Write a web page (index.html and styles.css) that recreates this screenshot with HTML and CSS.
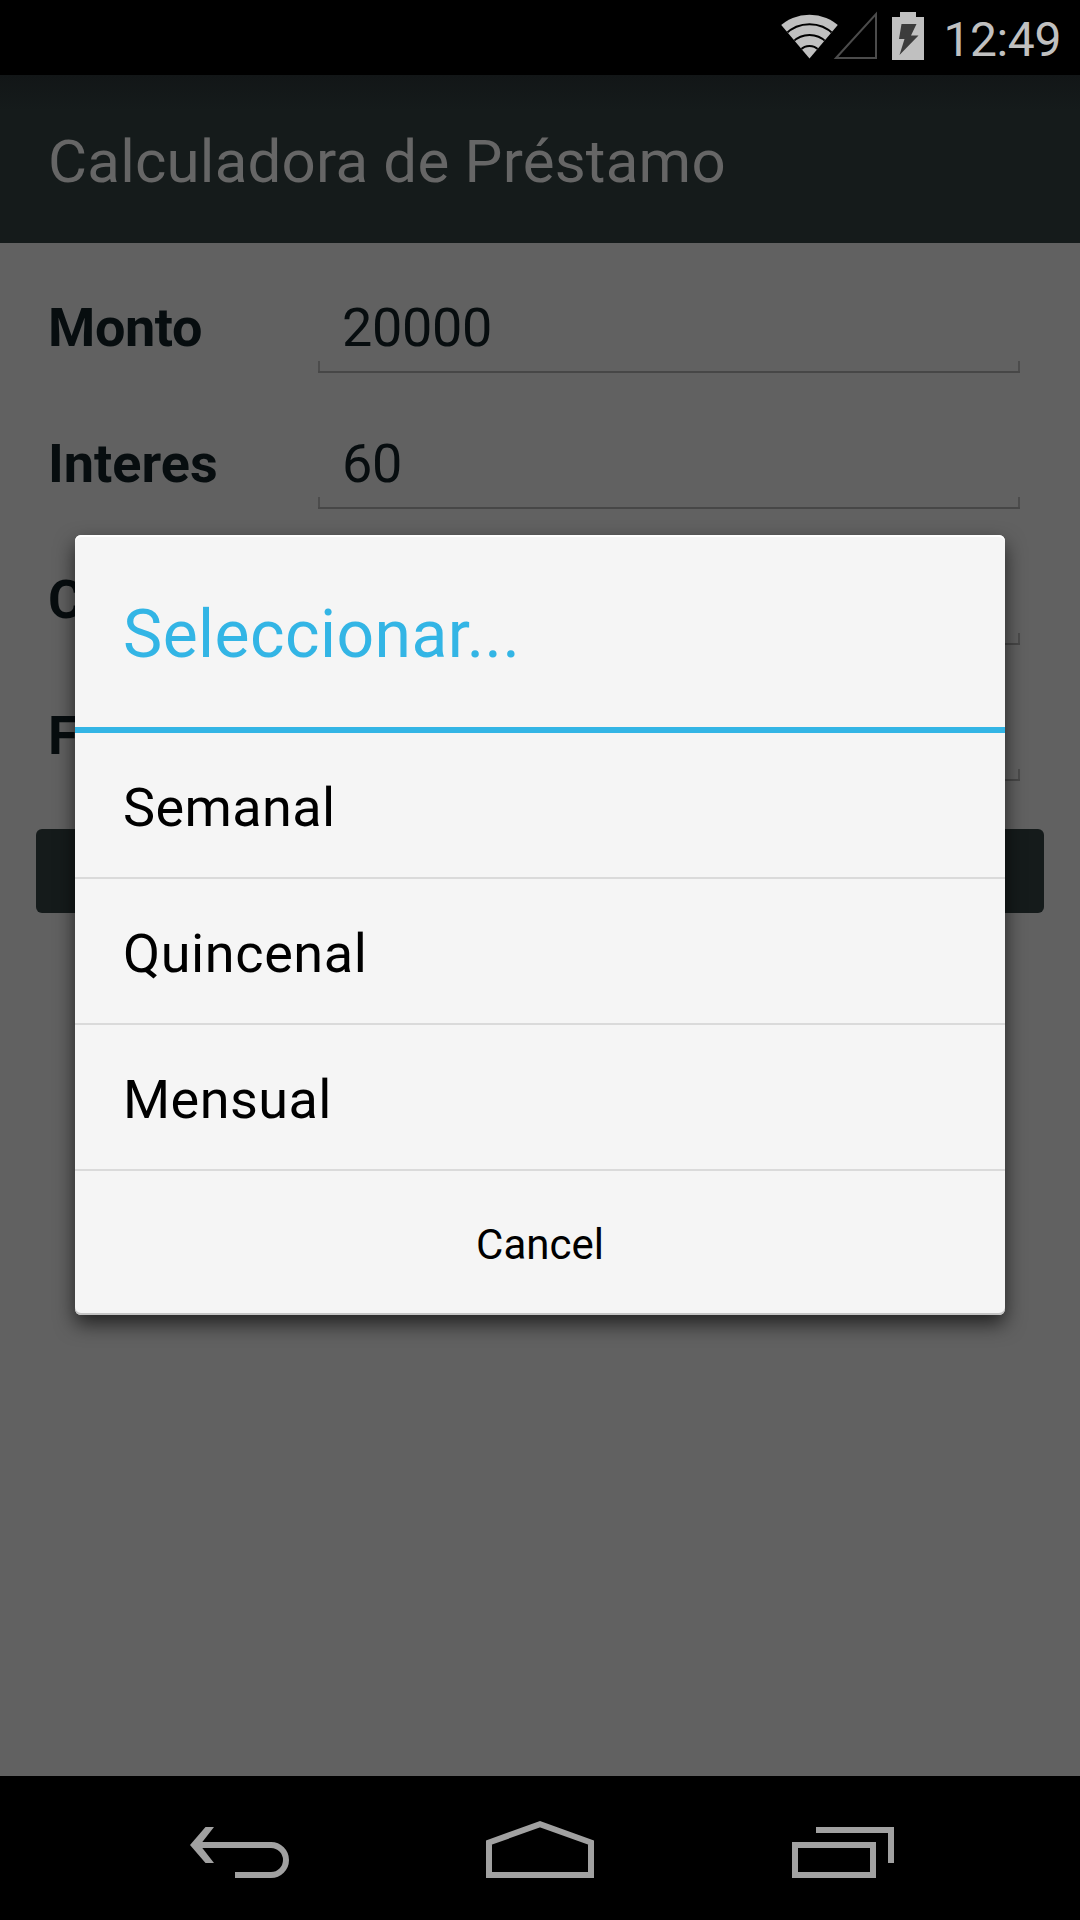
FILE: index.html
```html
<!DOCTYPE html>
<html lang="es">
<head>
<meta charset="utf-8">
<title>Calculadora de Préstamo</title>
<link rel="stylesheet" href="styles.css">
</head>
<body>
<div class="screen">
  <header class="status-bar">
    <svg class="status-icons" width="144" height="75" viewBox="0 0 144 75" aria-hidden="true">
      <clipPath id="wifi-cone"><path d="M29.500 58.500L-3 20V0H62V20Z"/></clipPath>
      <g clip-path="url(#wifi-cone)">
        <circle cx="29.500" cy="58.500" r="43.800" fill="#c0c0c0"/>
        <g fill="none" stroke="#000" stroke-width="2">
          <circle cx="29.500" cy="58.500" r="34.300"/>
          <circle cx="29.500" cy="58.500" r="23.500"/>
          <circle cx="29.500" cy="58.500" r="12.600"/>
        </g>
      </g>
      <path d="M56 58L96 14V58Z" fill="none" stroke="#4b4b4b" stroke-width="2"/>
      <path d="M112 17H120V12H136V17H144V60H112Z" fill="#c0c0c0"/>
      <path d="M121.500 24H136.500L131 35.500H138.500L119.500 55L124.500 39H119Z" fill="#3c3c3c"/>
    </svg>
    <span class="clock">12:49</span>
  </header>

  <div class="action-bar"><h1 class="app-title">Calculadora de Préstamo</h1></div>

  <main class="form">
    <div class="field"><span class="label monto">Monto</span><div class="input">20000</div></div>
    <div class="field"><span class="label">Interes</span><div class="input">60</div></div>
    <div class="field"><span class="label">C</span><div class="input"></div></div>
    <div class="field"><span class="label">F</span><div class="input"></div></div>
    <div class="button"></div>
  </main>

  <nav class="nav-bar">
    <svg width="1080" height="144" viewBox="0 0 1080 144" fill="none" stroke="#a1a1a1" stroke-width="6" aria-hidden="true">
      <path d="M198 69H271A15 15 0 0 1 271 99H235"/>
      <path d="M205.500 51H214L200 69L214 87H205.500L190 69Z" fill="#a1a1a1" stroke="none"/>
      <path d="M489 66.500L540 48.200L591 66.500V99H489Z"/>
      <path d="M795 69H873V99H795Z"/>
      <path d="M816 54H891V87"/>
    </svg>
  </nav>

  <section class="dialog" role="dialog">
    <h2 class="dialog-title">Seleccionar...</h2>
    <div class="option semanal">Semanal</div>
    <div class="option quincenal">Quincenal</div>
    <div class="option mensual">Mensual</div>
    <div class="cancel">Cancel</div>
  </section>
</div>
</body>
</html>
```
FILE: styles.css
```css
* { box-sizing: border-box; }
body { margin: 0; background: #000; font-family: Roboto, sans-serif; }
.screen {
  position: relative;
  display: flex;
  flex-direction: column;
  width: 1080px;
  height: 1920px;
  overflow: hidden;
}
.status-bar {
  display: flex;
  justify-content: flex-end;
  height: 75px;
  padding-right: 19px;
  background: #000;
}
.status-icons { flex: none; overflow: visible; }
.clock {
  width: 137px;
  padding-top: 5px;
  color: #c0c0c0;
  font-size: 48px;
  letter-spacing: -.4px;
  line-height: 69px;
  text-align: right;
}
.action-bar {
  height: 168px;
  padding: 5px 0 0 48px;
  background: linear-gradient(#121617, #151b1b 36px);
}
.app-title {
  margin: 0;
  color: #666;
  font-size: 60px;
  font-weight: 400;
  letter-spacing: .22px;
  line-height: 163px;
}
.form {
  flex: 1;
  padding: 22px 36px 0;
  background: #616161;
}
.field {
  display: flex;
  height: 136px;
  padding: 0 24px 28px 12px;
}
.label {
  width: 270px;
  color: #070d0f;
  font-size: 54px;
  font-weight: 700;
  line-height: 125px;
}
.monto { letter-spacing: -.4px; }
.input {
  flex: 1;
  padding-left: 24px;
  color: #070d0f;
  font-size: 54px;
  letter-spacing: -.35px;
  line-height: 125px;
  background:
    linear-gradient(#474747, #474747) bottom / 100% 2px no-repeat,
    linear-gradient(#4c4c4c, #4c4c4c) left bottom / 2px 12px no-repeat,
    linear-gradient(#4c4c4c, #4c4c4c) right bottom / 2px 12px no-repeat;
}
.button {
  height: 84px;
  margin-top: 20px;
  border-radius: 6px;
  background: #151b1b;
}
.nav-bar { height: 144px; background: #000; }
.nav-bar svg { display: block; }
.dialog {
  position: absolute;
  left: 75px;
  top: 535px;
  width: 930px;
  height: 780px;
  border-radius: 6px;
  background: #f5f5f5;
  color: #000;
  box-shadow: inset 0 2px #fff, inset 0 -2px #c4c4c4, 0 9px 20px rgba(0, 0, 0, .65);
}
.dialog-title {
  height: 198px;
  margin: 0;
  padding: 6px 0 0 48px;
  border-bottom: 6px solid #33b5e5;
  color: #33b5e5;
  font-size: 66px;
  font-weight: 400;
  letter-spacing: .45px;
  line-height: 187px;
}
.option {
  height: 146px;
  padding: 5px 0 0 48px;
  border-bottom: 2px solid #dadada;
  font-size: 54px;
  line-height: 139px;
}
.semanal { letter-spacing: .4px; }
.quincenal { letter-spacing: .6px; }
.mensual { letter-spacing: .45px; }
.cancel {
  padding-top: 5px;
  font-size: 42px;
  line-height: 137px;
  text-align: center;
}
```
